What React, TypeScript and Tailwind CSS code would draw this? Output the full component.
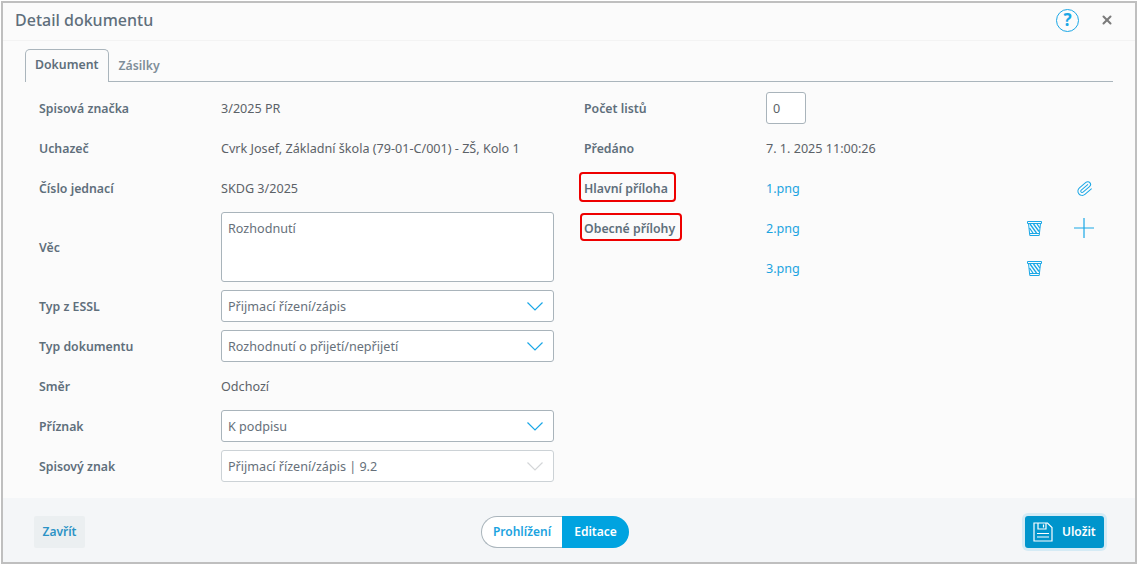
import React from 'react';
import { Paperclip, X } from 'lucide-react';

const labelCls = 'pt-[2px] text-[12.3px] font-semibold text-[#5f6f7b]';
const valueCls = 'text-[12.6px] text-[#5c6268]';

const Chevron = ({ disabled }: { disabled?: boolean }) => (
    <svg width="16" height="9" viewBox="0 0 16 9" fill="none" stroke={disabled ? '#d4d6d8' : '#1aa7e6'} strokeWidth="1.2">
        <path d="M0.5 0.5 L8 8 L15.5 0.5" />
    </svg>
);

const Trash = () => (
    <svg width="15" height="15" viewBox="0 0 15 15" fill="none" stroke="#1aa7e6" strokeWidth="1">
        <path d="M0.5 0.5 H14.5 V2.5 H0.5 Z" />
        <path d="M1.5 2.5 L2.8 14.5 H12.2 L13.5 2.5 M2.5 12.5 H12.5" />
        <path d="M3 3 L9.5 12 M6.5 3 L12 10.5 M10 3 L12.8 7 M2.5 7 L6 12" strokeWidth="1.3" />
    </svg>
);

const SaveIcon = () => (
    <svg width="20" height="20" viewBox="0 0 20 20" fill="none" stroke="#fff" strokeWidth="1.2">
        <path d="M1 1 H14.5 L19 5.5 V19 H1 Z" />
        <path d="M5 1 V7 H13 V1 M10.5 2.5 V5.5 M4 11.5 H16 M4 15 H16" />
    </svg>
);

const Row = ({ label, children, h = 'h-10' }: { label: string; children: React.ReactNode; h?: string }) => (
    <div className={`flex items-center ${h}`}>
        <div className={`w-[182px] shrink-0 ${labelCls}`}>{label}</div>
        <div className={`flex-1 ${valueCls}`}>{children}</div>
    </div>
);

const Plain = ({ children }: { children: React.ReactNode }) => <span className="block pt-[2px]">{children}</span>;

const Select = ({ value, disabled }: { value: string; disabled?: boolean }) => (
    <div className={`flex h-8 w-[333px] items-center justify-between rounded-[3px] border bg-white pl-[6px] pr-[10px] ${disabled ? 'border-[#ccd2d6]' : 'border-[#a9b4bb]'}`}>
        <span className="pt-[2px] text-[12.6px] text-[#66707a]">{value}</span>
        <Chevron disabled={disabled} />
    </div>
);

const FileRow = ({ label, file, trash, action, box }: { label?: string; file: string; trash?: boolean; action?: React.ReactNode; box?: string }) => (
    <div className="flex h-10 items-center">
        <div className={`relative w-[182px] shrink-0 ${labelCls}`}>
            {label}
            {box && <div className={`absolute rounded-[4px] border-2 border-[#ee0000] ${box}`} />}
        </div>
        <a className="flex-1 pt-[2px] text-[12.6px] text-[#1ba3e0]">{file}</a>
        <div className="flex w-[50px] justify-center">{trash && <Trash />}</div>
        <div className="flex w-[50px] justify-center text-[#1aa7e6]">{action}</div>
    </div>
);

const App: React.FC = () => {
    return (
        <div className="h-[565px] w-[1138px] bg-white p-px font-['Noto_Sans',sans-serif]">
            <div className="flex h-full flex-col border-2 border-[#bfbfbf] bg-[#fbfbfb]">
                <div className="flex h-[38px] shrink-0 items-center justify-between border-b border-[#f3f3f3] pb-[3px] pl-3 pr-[21px]">
                    <h1 className="text-[16px] font-medium text-[#5f6f7b]">Detail dokumentu</h1>
                    <div className="flex items-center gap-[21px]">
                        <div className="flex h-[23px] w-[23px] items-center justify-center rounded-full border-[1.5px] border-[#1aa7e6] text-[17px] font-bold text-[#1aa7e6]">?</div>
                        <X size={14} strokeWidth={3.5} className="text-[#7b7b7b]" />
                    </div>
                </div>

                <div className="flex-1 px-[22px] pt-[8px]">
                    <div className="flex h-[33px] items-end border-b border-[#aab5bc]">
                        <div className="-mb-px flex h-[33px] items-center rounded-t-[5px] border border-b-0 border-[#aab5bc] bg-[#fbfbfb] px-[9px] pb-[2px] text-[12.3px] font-semibold text-[#5f6f7b]">Dokument</div>
                        <div className="flex h-[32px] items-center px-[10px] pt-[2px] text-[12.3px] font-semibold text-[#7f8e98]">Zásilky</div>
                    </div>

                    <div className="flex pl-[14px] pt-[6px]">
                        <div className="w-[545px] shrink-0">
                            <Row label="Spisová značka"><Plain>3/2025 PR</Plain></Row>
                            <Row label="Uchazeč"><Plain>Cvrk Josef, Základní škola (79-01-C/001) - ZŠ, Kolo 1</Plain></Row>
                            <Row label="Číslo jednací"><Plain>SKDG 3/2025</Plain></Row>
                            <Row label="Věc" h="h-[78px]">
                                <div className="h-[70px] w-[333px] rounded-[3px] border border-[#a9b4bb] bg-white px-[6px] pt-[7px] text-[#66707a]">Rozhodnutí</div>
                            </Row>
                            <Row label="Typ z ESSL"><Select value="Přijmací řízení/zápis" /></Row>
                            <Row label="Typ dokumentu"><Select value="Rozhodnutí o přijetí/nepřijetí" /></Row>
                            <Row label="Směr"><Plain>Odchozí</Plain></Row>
                            <Row label="Příznak"><Select value="K podpisu" /></Row>
                            <Row label="Spisový znak"><Select value="Přijmací řízení/zápis | 9.2" disabled /></Row>
                        </div>
                        <div className="flex-1 pr-[4px]">
                            <Row label="Počet listů">
                                <div className="flex h-8 w-10 items-center rounded-[3px] border border-[#a9b4bb] bg-white pl-[6px] pt-[2px] text-[#5c6268]">0</div>
                            </Row>
                            <Row label="Předáno"><Plain>7. 1. 2025 11:00:26</Plain></Row>
                            <FileRow label="Hlavní příloha" file="1.png" box="-left-[5px] -top-[6px] h-[30px] w-[97px]" action={<Paperclip size={17} strokeWidth={1.4} className="rotate-[5deg]" />} />
                            <FileRow
                                label="Obecné přílohy"
                                file="2.png"
                                trash
                                box="-left-[4px] -top-[5px] h-[28px] w-[102px]"
                                action={
                                    <svg width="20" height="20" viewBox="0 0 20 20" stroke="#1aa7e6" strokeWidth="1.2">
                                        <path d="M0 10 H20 M10 0 V20" />
                                    </svg>
                                }
                            />
                            <FileRow file="3.png" trash />
                        </div>
                    </div>
                </div>

                <div className="flex h-[64px] shrink-0 items-center justify-between bg-[#f4f6f8] pl-[31px] pr-[31px] pt-1">
                    <button className="h-8 w-[51px] rounded-[2px] bg-[#ebeff1] text-[12px] font-semibold text-[#2b93c6]">Zavřít</button>
                    <div className="flex h-8 w-[148px] text-[12px] font-semibold">
                        <div className="flex w-[81px] items-center justify-center rounded-l-full border border-r-0 border-[#aab5bc] bg-white text-[#1ba3e0]">Prohlížení</div>
                        <div className="flex flex-1 items-center justify-center rounded-r-full bg-[#00a3e0] text-white">Editace</div>
                    </div>
                    <button className="flex h-8 w-[79px] items-center gap-[9px] rounded-[3px] bg-[#0095cc] pl-2 text-[12px] font-semibold text-white ring-[3px] ring-[#d5ebf5]">
                        <SaveIcon />
                        Uložit
                    </button>
                </div>
            </div>
        </div>
    );
};

export default App;
